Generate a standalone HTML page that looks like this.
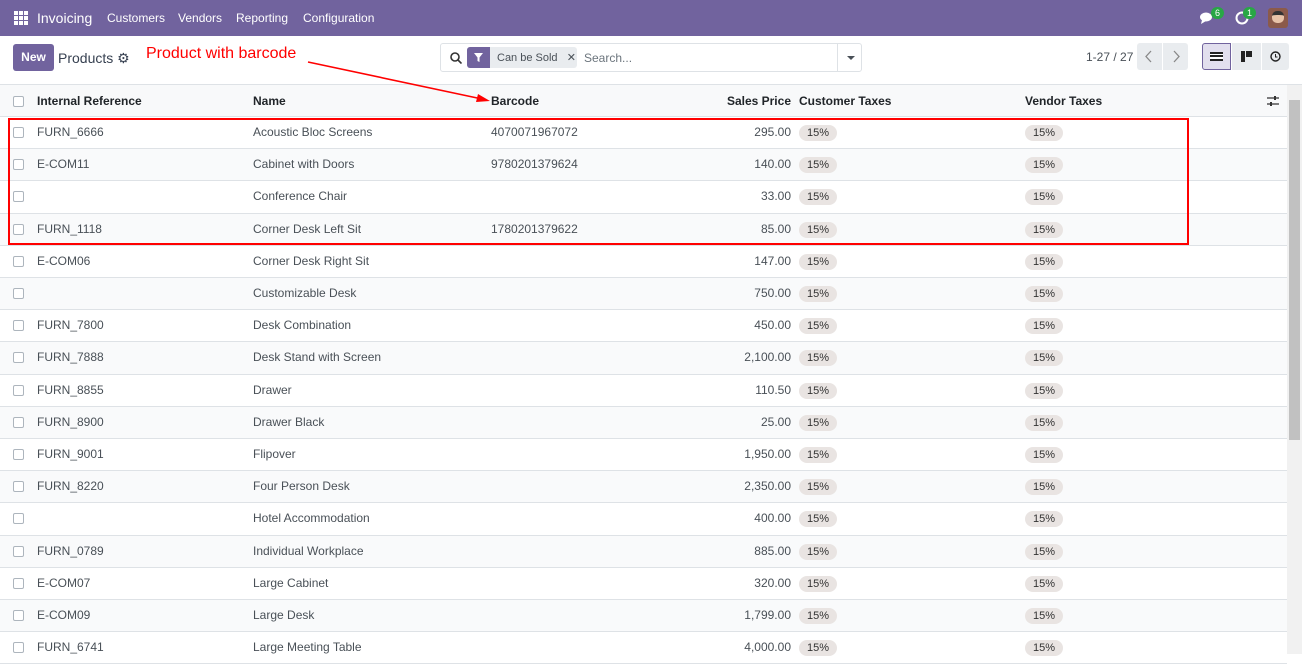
<!DOCTYPE html>
<html><head><style>
*{box-sizing:border-box;margin:0;padding:0}
body{width:1302px;height:654px;overflow:hidden;font-family:"Liberation Sans",sans-serif;font-size:12px;color:#495057;background:#fff;position:relative}
.nav{position:absolute;left:0;top:0;width:1302px;height:36px;background:#71639e;color:#fff}
.nav span{position:absolute;top:11px;font-size:12px}
.cp{position:absolute;top:36px;left:0;width:1302px;height:49px;border-bottom:1px solid #dee2e6}
.hdr{position:absolute;top:85px;left:0;width:1287px;height:32px;background:#f8f9fa;border-bottom:1px solid #dee2e6;font-weight:bold;color:#212529}
.hdr .c{top:9px}
.row{position:absolute;left:0;width:1287px;height:32.2px;border-bottom:1px solid #dee2e6}
.row:nth-child(even){background:#f9fafb}
.c{position:absolute;top:8px;white-space:nowrap}
.cb{position:absolute;left:13px;width:11px;height:11px;border:1px solid #adb5bd;border-radius:2px;background:#fff}
.tag{position:absolute;top:8px;width:38px;height:16px;border-radius:8px;background:#e9e4e2;color:#333;font-size:11px;text-align:center;line-height:16px}
.r{text-align:right;width:100px}
</style></head><body>
<div class="nav">
<svg style="position:absolute;left:14px;top:11px" width="14" height="14"><g fill="#fff"><rect x="0" y="0" width="4" height="4"/><rect x="5" y="0" width="4" height="4"/><rect x="10" y="0" width="4" height="4"/><rect x="0" y="5" width="4" height="4"/><rect x="5" y="5" width="4" height="4"/><rect x="10" y="5" width="4" height="4"/><rect x="0" y="10" width="4" height="4"/><rect x="5" y="10" width="4" height="4"/><rect x="10" y="10" width="4" height="4"/></g></svg>
<span style="left:37px;top:10px;font-size:14px">Invoicing</span>
<span style="left:107px">Customers</span><span style="left:178px">Vendors</span><span style="left:236px">Reporting</span><span style="left:303px">Configuration</span>
<svg style="position:absolute;left:1200px;top:12px" width="14" height="12"><ellipse cx="6" cy="5" rx="6" ry="4.5" fill="#fff"/><path d="M2 8 L1 12 L6 9z" fill="#fff"/></svg>
<div style="position:absolute;left:1211px;top:7px;width:13px;height:12px;border-radius:6px;background:#28a745;font-size:9px;text-align:center;line-height:12px">6</div>
<svg style="position:absolute;left:1235px;top:11px" width="14" height="14"><circle cx="7" cy="7" r="5.5" fill="none" stroke="#fff" stroke-width="2"/></svg>
<div style="position:absolute;left:1243px;top:7px;width:13px;height:12px;border-radius:6px;background:#28a745;font-size:9px;text-align:center;line-height:12px">1</div>
<div style="position:absolute;left:1268px;top:8px;width:20px;height:20px;border-radius:3px;background:#8b5a4a"><div style="margin:3px 4px;width:12px;height:12px;border-radius:5px;background:#e8c3a8;border-top:4px solid #333"></div></div>
</div>
<div class="cp">
<div style="position:absolute;left:13px;top:8px;width:41px;height:27px;background:#71639e;border-radius:3px;color:#fff;font-weight:bold;text-align:center;line-height:27px">New</div>
<span style="position:absolute;left:58px;top:14px;font-size:14px;color:#374151">Products ⚙</span>
<span style="position:absolute;left:146px;top:9px;font-size:16px;color:#f00">Product with barcode</span>
<div style="position:absolute;left:440px;top:7px;width:422px;height:29px;border:1px solid #dee2e6;border-radius:3px">
<svg style="position:absolute;left:9px;top:8px" width="12" height="12"><circle cx="5" cy="5" r="4" fill="none" stroke="#333" stroke-width="1.6"/><path d="M8 8l3.5 3.5" stroke="#333" stroke-width="1.6"/></svg>
<div style="position:absolute;left:26px;top:3px;width:110px;height:21px;background:#e9ecef;border-radius:3px"><div style="width:23px;height:21px;background:#71639e;border-radius:3px 0 0 3px"><svg width="23" height="21"><path d="M7 6h9l-3.5 4.5v4.5l-2 -1v-3.5z" fill="#fff"/></svg></div><span style="position:absolute;left:30px;top:4px;font-size:11px">Can be Sold &nbsp; ✕</span></div>
<span style="position:absolute;left:143px;top:7px;color:#6c757d">Search...</span>
<div style="position:absolute;left:396px;top:0;width:1px;height:27px;background:#dee2e6"></div>
<div style="position:absolute;left:406px;top:12px;border:4px solid transparent;border-top:4px solid #495057"></div>
</div>
<span style="position:absolute;left:1086px;top:14px">1-27 / 27</span>
<div style="position:absolute;left:1137px;top:7px;width:51px;height:27px;background:#e9ecef;border-radius:3px"><svg width="51" height="27"><path d="M14 8l-5 5.5 5 5.5M37 8l5 5.5-5 5.5" fill="none" stroke="#888" stroke-width="1.3"/><line x1="25.5" y1="0" x2="25.5" y2="27" stroke="#fff"/></svg></div>
<div style="position:absolute;left:1202px;top:7px;width:29px;height:27px;background:#e2dfee;border:1px solid #71639e;border-radius:3px 0 0 3px"><div style="margin:8px 7px;width:13px;height:9px;border-top:2px solid #222;border-bottom:2px solid #222;background:linear-gradient(#fff 1px,#222 1px,#222 3px,#fff 3px)"></div></div>
<div style="position:absolute;left:1232px;top:7px;width:29px;height:27px;background:#e9ecef"><div style="position:absolute;left:9px;top:8px;width:4px;height:11px;background:#222"></div><div style="position:absolute;left:14px;top:8px;width:6px;height:6px;background:#222"></div></div>
<div style="position:absolute;left:1262px;top:7px;width:27px;height:27px;background:#e9ecef;border-radius:0 3px 3px 0"><svg style="position:absolute;left:8px;top:8px" width="11" height="11"><circle cx="5.5" cy="5.5" r="4.5" fill="none" stroke="#222" stroke-width="1.4"/><path d="M5.5 3v3h2" stroke="#222" fill="none"/></svg></div>
</div>
<div class="hdr">
<div class="cb" style="top:11px"></div>
<span class="c" style="left:37px">Internal Reference</span><span class="c" style="left:253px">Name</span><span class="c" style="left:491px">Barcode</span><span class="c r" style="left:691px">Sales Price</span><span class="c" style="left:799px">Customer Taxes</span><span class="c" style="left:1025px">Vendor Taxes</span>
<svg style="position:absolute;left:1267px;top:10px" width="12" height="12"><path d="M0 3h12M0 9h12" stroke="#333" stroke-width="1.3"/><rect x="7" y="1" width="2" height="4" fill="#333"/><rect x="3" y="7" width="2" height="4" fill="#333"/></svg>
</div>
<div id="rows" style="position:absolute;top:117px;left:0">
<div class="row" style="top:0"><div class="cb" style="top:10px"></div><span class="c" style="left:37px">FURN_6666</span><span class="c" style="left:253px">Acoustic Bloc Screens</span><span class="c" style="left:491px">4070071967072</span><span class="c r" style="left:691px">295.00</span><div class="tag" style="left:799px">15%</div><div class="tag" style="left:1025px">15%</div></div>
<div class="row" style="top:32.2px"><div class="cb" style="top:10px"></div><span class="c" style="left:37px">E-COM11</span><span class="c" style="left:253px">Cabinet with Doors</span><span class="c" style="left:491px">9780201379624</span><span class="c r" style="left:691px">140.00</span><div class="tag" style="left:799px">15%</div><div class="tag" style="left:1025px">15%</div></div>
<div class="row" style="top:64.4px"><div class="cb" style="top:10px"></div><span class="c" style="left:253px">Conference Chair</span><span class="c r" style="left:691px">33.00</span><div class="tag" style="left:799px">15%</div><div class="tag" style="left:1025px">15%</div></div>
<div class="row" style="top:96.6px"><div class="cb" style="top:10px"></div><span class="c" style="left:37px">FURN_1118</span><span class="c" style="left:253px">Corner Desk Left Sit</span><span class="c" style="left:491px">1780201379622</span><span class="c r" style="left:691px">85.00</span><div class="tag" style="left:799px">15%</div><div class="tag" style="left:1025px">15%</div></div>
<div class="row" style="top:128.8px"><div class="cb" style="top:10px"></div><span class="c" style="left:37px">E-COM06</span><span class="c" style="left:253px">Corner Desk Right Sit</span><span class="c r" style="left:691px">147.00</span><div class="tag" style="left:799px">15%</div><div class="tag" style="left:1025px">15%</div></div>
<div class="row" style="top:161px"><div class="cb" style="top:10px"></div><span class="c" style="left:253px">Customizable Desk</span><span class="c r" style="left:691px">750.00</span><div class="tag" style="left:799px">15%</div><div class="tag" style="left:1025px">15%</div></div>
<div class="row" style="top:193.2px"><div class="cb" style="top:10px"></div><span class="c" style="left:37px">FURN_7800</span><span class="c" style="left:253px">Desk Combination</span><span class="c r" style="left:691px">450.00</span><div class="tag" style="left:799px">15%</div><div class="tag" style="left:1025px">15%</div></div>
<div class="row" style="top:225.4px"><div class="cb" style="top:10px"></div><span class="c" style="left:37px">FURN_7888</span><span class="c" style="left:253px">Desk Stand with Screen</span><span class="c r" style="left:691px">2,100.00</span><div class="tag" style="left:799px">15%</div><div class="tag" style="left:1025px">15%</div></div>
<div class="row" style="top:257.6px"><div class="cb" style="top:10px"></div><span class="c" style="left:37px">FURN_8855</span><span class="c" style="left:253px">Drawer</span><span class="c r" style="left:691px">110.50</span><div class="tag" style="left:799px">15%</div><div class="tag" style="left:1025px">15%</div></div>
<div class="row" style="top:289.8px"><div class="cb" style="top:10px"></div><span class="c" style="left:37px">FURN_8900</span><span class="c" style="left:253px">Drawer Black</span><span class="c r" style="left:691px">25.00</span><div class="tag" style="left:799px">15%</div><div class="tag" style="left:1025px">15%</div></div>
<div class="row" style="top:322px"><div class="cb" style="top:10px"></div><span class="c" style="left:37px">FURN_9001</span><span class="c" style="left:253px">Flipover</span><span class="c r" style="left:691px">1,950.00</span><div class="tag" style="left:799px">15%</div><div class="tag" style="left:1025px">15%</div></div>
<div class="row" style="top:354.2px"><div class="cb" style="top:10px"></div><span class="c" style="left:37px">FURN_8220</span><span class="c" style="left:253px">Four Person Desk</span><span class="c r" style="left:691px">2,350.00</span><div class="tag" style="left:799px">15%</div><div class="tag" style="left:1025px">15%</div></div>
<div class="row" style="top:386.4px"><div class="cb" style="top:10px"></div><span class="c" style="left:253px">Hotel Accommodation</span><span class="c r" style="left:691px">400.00</span><div class="tag" style="left:799px">15%</div><div class="tag" style="left:1025px">15%</div></div>
<div class="row" style="top:418.6px"><div class="cb" style="top:10px"></div><span class="c" style="left:37px">FURN_0789</span><span class="c" style="left:253px">Individual Workplace</span><span class="c r" style="left:691px">885.00</span><div class="tag" style="left:799px">15%</div><div class="tag" style="left:1025px">15%</div></div>
<div class="row" style="top:450.8px"><div class="cb" style="top:10px"></div><span class="c" style="left:37px">E-COM07</span><span class="c" style="left:253px">Large Cabinet</span><span class="c r" style="left:691px">320.00</span><div class="tag" style="left:799px">15%</div><div class="tag" style="left:1025px">15%</div></div>
<div class="row" style="top:483px"><div class="cb" style="top:10px"></div><span class="c" style="left:37px">E-COM09</span><span class="c" style="left:253px">Large Desk</span><span class="c r" style="left:691px">1,799.00</span><div class="tag" style="left:799px">15%</div><div class="tag" style="left:1025px">15%</div></div>
<div class="row" style="top:515.2px"><div class="cb" style="top:10px"></div><span class="c" style="left:37px">FURN_6741</span><span class="c" style="left:253px">Large Meeting Table</span><span class="c r" style="left:691px">4,000.00</span><div class="tag" style="left:799px">15%</div><div class="tag" style="left:1025px">15%</div></div>
</div>
<div style="position:absolute;left:1287px;top:85px;width:15px;height:569px;background:#f1f1f1"><div style="position:absolute;left:2px;top:15px;width:11px;height:340px;background:#c1c1c1"></div></div>
<div style="position:absolute;left:8px;top:118px;width:1181px;height:127px;border:2px solid #f00"></div>
<svg style="position:absolute;left:0;top:0" width="1302" height="654"><line x1="308" y1="62" x2="482" y2="99" stroke="#f00" stroke-width="1.6"/><path d="M490 101 L478 94 L476 102z" fill="#f00"/></svg>
</body></html>
